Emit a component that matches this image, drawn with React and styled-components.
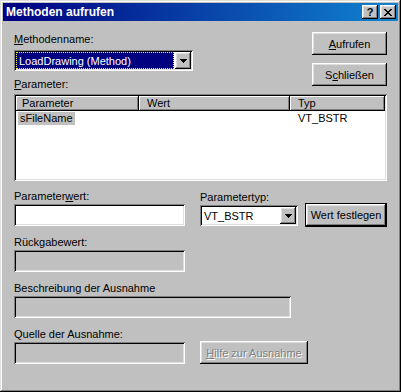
import styled, { createGlobalStyle } from 'styled-components'

const GlobalStyle = createGlobalStyle`
  html, body { margin: 0; padding: 0; background: #c0c0c0; }
  body {
    font-family: "Liberation Sans", Arial, sans-serif;
    font-size: 11px;
    color: #000;
  }
`

// classic 3d borders
const raised = `
  background: #c0c0c0;
  box-shadow: inset -1px -1px #000, inset 1px 1px #fff, inset -2px -2px #808080, inset 2px 2px #dfdfdf;
`
const sunken = `
  box-shadow: inset 1px 1px #808080, inset -1px -1px #fff, inset 2px 2px #000, inset -2px -2px #dfdfdf;
`

const Window = styled.div`
  width: 401px;
  height: 392px;
  box-sizing: border-box;
  padding: 3px;
  background: #c0c0c0;
  box-shadow: inset -1px -1px #000, inset 1px 1px #dfdfdf, inset -2px -2px #808080, inset 2px 2px #fff;
  display: flex;
  flex-direction: column;
`

const TitleBar = styled.div`
  height: 18px;
  flex: none;
  display: flex;
  align-items: center;
  padding: 0 2px 0 3px;
  background: linear-gradient(90deg, #000080, #1084d0);
  color: #fff;
  font-weight: bold;
  font-size: 12px;
`

const Title = styled.span`
  flex: 1;
`

const TitleButton = styled.div`
  width: 16px;
  height: 14px;
  ${raised}
  display: flex;
  align-items: center;
  justify-content: center;
  color: #000;
  font-size: 11px;
  font-weight: bold;
  & + & { margin-left: 2px; }
`

const Content = styled.div`
  padding: 11px 11px 0 11px;
  display: flex;
  flex-direction: column;
`

const TopGrid = styled.div`
  display: grid;
  grid-template-columns: 1fr 75px;
`

const LeftCol = styled.div`
  padding-top: 1px;
  display: flex;
  flex-direction: column;
`

const RightCol = styled.div`
  display: flex;
  flex-direction: column;
  gap: 8px;
`

const Label = styled.div`
  height: 13px;
  line-height: 13px;
  margin-top: ${p => p.$top || 0}px;
  margin-bottom: ${p => p.$bottom ?? 1}px;
  white-space: nowrap;
`

const Button = styled.div`
  width: ${p => p.$w || 75}px;
  height: ${p => (p.$default ? 24 : 23)}px;
  box-sizing: border-box;
  ${raised}
  ${p => p.$default && 'border: 1px solid #000;'}
  display: flex;
  align-items: center;
  justify-content: center;
  margin-left: ${p => p.$ml || 0}px;
  margin-bottom: ${p => p.$mb || 0}px;
  color: ${p => (p.$disabled ? '#808080' : '#000')};
  text-shadow: ${p => (p.$disabled ? '1px 1px #fff' : 'none')};
  white-space: nowrap;
`

const Combo = styled.div`
  width: ${p => p.$w}px;
  height: 21px;
  margin-top: ${p => p.$top || 0}px;
  box-sizing: border-box;
  padding: 2px;
  background: #fff;
  ${sunken}
  display: flex;
`

const ComboValue = styled.div`
  flex: 1;
  margin-right: 1px;
  display: flex;
  align-items: center;
  padding-left: 2px;
  box-sizing: border-box;
  ${p => p.$selected && `
    background: #000080;
    color: #fff;
    border: 1px dotted #ffff00;
    padding-left: 2px;
  `}
`

const DropButton = styled.div`
  width: 16px;
  height: 17px;
  flex: none;
  ${raised}
  display: flex;
  align-items: center;
  justify-content: center;
`

const List = styled.div`
  height: 87px;
  margin-top: 3px;
  box-sizing: border-box;
  padding: 2px;
  background: #fff;
  ${sunken}
`

const HeaderRow = styled.div`
  display: flex;
  height: 15px;
`

const HeaderCell = styled.div`
  width: ${p => p.$w}px;
  flex: none;
  box-sizing: border-box;
  ${raised}
  box-shadow: inset -1px -1px #000, inset 1px 1px #fff, inset -2px -2px #808080;
  padding-left: ${p => p.$pad}px;
  line-height: 15px;
`

const ListRow = styled.div`
  display: flex;
  height: 14px;
  align-items: center;
`

const Cell = styled.div`
  width: ${p => p.$w}px;
  flex: none;
  box-sizing: border-box;
  padding-left: ${p => p.$pad}px;
  white-space: nowrap;
`

const Highlight = styled.span`
  background: #c0c0c0;
  padding: 0 2px;
  display: inline-block;
  line-height: 13px;
`

const Lower = styled.div`
  display: flex;
  flex-direction: column;
  gap: 10px;
  margin-top: 9px;
`

const Row = styled.div`
  display: flex;
  align-items: flex-end;
`

const Field = styled.div`
  width: ${p => p.$w}px;
  flex: none;
  display: flex;
  flex-direction: column;
  margin-right: ${p => p.$mr || 0}px;
`

const TextBox = styled.div`
  height: 22px;
  background: ${p => (p.$disabled ? '#c0c0c0' : '#fff')};
  ${sunken}
`

const Arrow = () => (
  <svg width="7" height="4" viewBox="0 0 7 4" shapeRendering="crispEdges">
    <path d="M0 0h7v1H0zM1 1h5v1H1zM2 2h3v1H2zM3 3h1v1H3z" fill="#000" />
  </svg>
)

const CloseGlyph = () => (
  <svg width="8" height="7" viewBox="0 0 8 7" shapeRendering="crispEdges">
    <path d="M0 0h2v1H0zM6 0h2v1H6zM1 1h2v1H1zM5 1h2v1H5zM2 2h4v1H2zM3 3h2v1H3zM2 4h4v1H2zM1 5h2v1H1zM5 5h2v1H5zM0 6h2v1H0zM6 6h2v1H6z" fill="#000" />
  </svg>
)

function App() {
  return (
    <>
      <GlobalStyle />
      <Window>
        <TitleBar>
          <Title>Methoden aufrufen</Title>
          <TitleButton>?</TitleButton>
          <TitleButton><CloseGlyph /></TitleButton>
        </TitleBar>

        <Content>
          <TopGrid>
            <LeftCol>
              <Label $bottom={4}><u>M</u>ethodenname:</Label>
              <Combo $w={179}>
                <ComboValue $selected>LoadDrawing (Method)</ComboValue>
                <DropButton><Arrow /></DropButton>
              </Combo>
              <Label $top={7} $bottom={0}><u>P</u>arameter:</Label>
            </LeftCol>
            <RightCol>
              <Button><u>A</u>ufrufen</Button>
              <Button>S<u>c</u>hließen</Button>
            </RightCol>
          </TopGrid>

          <List>
            <HeaderRow>
              <HeaderCell $w={123} $pad={6}>Parameter</HeaderCell>
              <HeaderCell $w={151} $pad={8}>Wert</HeaderCell>
              <HeaderCell $w={95} $pad={8}>Typ</HeaderCell>
            </HeaderRow>
            <ListRow>
              <Cell $w={123} $pad={2}><Highlight>sFileName</Highlight></Cell>
              <Cell $w={151} $pad={8}></Cell>
              <Cell $w={95} $pad={8}>VT_BSTR</Cell>
            </ListRow>
          </List>

          <Lower>
            <Row>
              <Field $w={171} $mr={15}>
                <Label>Parameter<u>w</u>ert:</Label>
                <TextBox />
              </Field>
              <Field $w={98}>
                <Label $bottom={0}>Parametertyp:</Label>
                <Combo $w={98} $top={1}>
                  <ComboValue>VT_BSTR</ComboValue>
                  <DropButton><Arrow /></DropButton>
                </Combo>
              </Field>
              <Button $default $w={86} $ml={7} $mb={-1}>Wert festlegen</Button>
            </Row>
            <Row>
              <Field $w={171}>
                <Label>Rückgabewert:</Label>
                <TextBox $disabled />
              </Field>
            </Row>
            <Row>
              <Field $w={277}>
                <Label>Beschreibung der Ausnahme</Label>
                <TextBox $disabled />
              </Field>
            </Row>
            <Row>
              <Field $w={171} $mr={15}>
                <Label>Quelle der Ausnahme:</Label>
                <TextBox $disabled />
              </Field>
              <Button $disabled $w={108} $mb={0}><u>H</u>ilfe zur Ausnahme</Button>
            </Row>
          </Lower>
        </Content>
      </Window>
    </>
  )
}

export default App
